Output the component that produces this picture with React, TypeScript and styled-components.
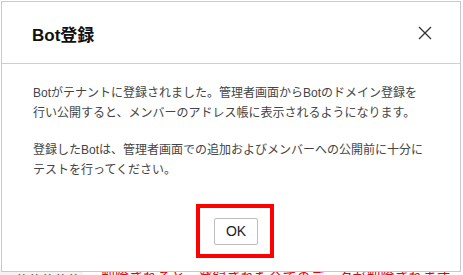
import React from "react";
import styled, { createGlobalStyle } from "styled-components";

const Global = createGlobalStyle`
  html, body { margin: 0; padding: 0; background: #fff; }
  body {
    width: 463px; height: 275px; overflow: hidden;
    font-family: "Liberation Sans", "Noto Sans CJK JP", sans-serif;
  }
`;

const Page = styled.div`
  position: relative;
  width: 463px;
  height: 275px;
  overflow: hidden;
  background: #fff;
`;

const BackRow = styled.div`
  display: flex;
  align-items: flex-start;
  padding-top: 269px;
  font-size: 13px;
  line-height: 16px;
  white-space: nowrap;
`;

const BackCell = styled.div`
  width: 107px;
  padding-left: 15px;
  box-sizing: border-box;
  background: #f3f3f3;
  color: #555;
`;

const BackWarn = styled.div`
  padding-left: 18px;
  color: #e00;
  font-size: 14px;
`;

const Dialog = styled.div`
  position: absolute;
  left: 1px;
  top: 1px;
  width: 460px;
  height: 271px;
  box-sizing: border-box;
  border: 1px solid #c9c9c9;
  background: #fff;
  display: flex;
  flex-direction: column;
`;

const Header = styled.div`
  height: 61px;
  flex: none;
  display: flex;
  align-items: center;
  justify-content: space-between;
  padding: 0 28px 0 30px;
  border-bottom: 1px solid #cfcfcf;
`;

const Title = styled.h1`
  margin: 0;
  font-size: 17px;
  font-weight: 700;
  color: #111;
  padding-top: 2px;
`;

const CloseButton = styled.button`
  border: none;
  background: none;
  padding: 0;
  width: 15px;
  height: 15px;
  display: flex;
  align-items: center;
  justify-content: center;
  cursor: pointer;
`;

const Body = styled.div`
  flex: 1;
  display: flex;
  flex-direction: column;
  padding: 19px 20px 0 31px;
`;

const Paragraph = styled.p`
  margin: 0 0 17px;
  font-family: "Liberation Sans", "Noto Sans CJK JP", sans-serif;
  font-size: 12px;
  line-height: 20px;
  color: #444;
  white-space: nowrap;
`;

const Actions = styled.div`
  display: flex;
  justify-content: center;
  margin-top: 7px;
  padding-right: 3px;
`;

const Highlight = styled.div`
  width: 78px;
  height: 54px;
  box-sizing: border-box;
  border: 4px solid #f00;
  display: flex;
  align-items: center;
  justify-content: center;
  padding-left: 2px;
`;

const OkButton = styled.button`
  width: 44px;
  height: 27px;
  box-sizing: border-box;
  border: 1px solid #bdbdbd;
  border-radius: 2px;
  background: #fff;
  color: #222;
  font-family: "Liberation Sans", sans-serif;
  font-size: 14px;
  padding: 0;
  cursor: pointer;
`;

export default function App() {
  return (
    <Page>
      <Global />
      <BackRow>
        <BackCell>ｘｘｘｘｘ</BackCell>
        <BackWarn>削除されると、登録された全てのデータが削除されます。</BackWarn>
      </BackRow>
      <Dialog>
        <Header>
          <Title>Bot登録</Title>
          <CloseButton aria-label="close">
            <svg width="14" height="14" viewBox="0 0 14 14">
              <path d="M1 1 L13 13 M13 1 L1 13" stroke="#333" strokeWidth="1.3" fill="none" />
            </svg>
          </CloseButton>
        </Header>
        <Body>
          <Paragraph>
            Botがテナントに登録されました。管理者画面からBotのドメイン登録を
            <br />
            行い公開すると、メンバーのアドレス帳に表示されるようになります。
          </Paragraph>
          <Paragraph>
            登録したBotは、管理者画面での追加およびメンバーへの公開前に十分に
            <br />
            テストを行ってください。
          </Paragraph>
          <Actions>
            <Highlight>
              <OkButton>OK</OkButton>
            </Highlight>
          </Actions>
        </Body>
      </Dialog>
    </Page>
  );
}
